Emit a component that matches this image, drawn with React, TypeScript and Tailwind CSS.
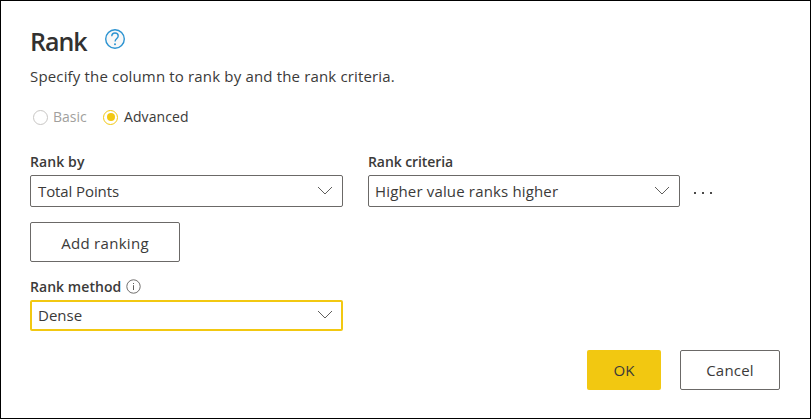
import React from "react";

function Chevron() {
  return (
    <svg width="16" height="9" viewBox="0 0 16 9" fill="none" stroke="#605e5c" strokeWidth="1" className="-mt-[2px] shrink-0">
      <path d="M1 1 L8 8 L15 1" />
    </svg>
  );
}

function Select({ children, focused = false }: { children: React.ReactNode; focused?: boolean }) {
  return (
    <button
      className={
        focused
          ? "flex h-[31px] w-full items-center justify-between rounded-[2px] border-2 border-[#f2c811] pl-[6px] pr-[8px] text-[15px]"
          : "flex h-8 w-full items-center justify-between rounded-[2px] border border-[#6b6967] pl-[7px] pr-[9px] text-[15px]"
      }
    >
      {children}
      <Chevron />
    </button>
  );
}

export default function App() {
  return (
    <main className="h-[419px] w-[811px] overflow-hidden whitespace-nowrap border border-black bg-white pl-[29px] pt-[24px] font-['Open_Sans','Noto_Sans',sans-serif] text-[14px] leading-5 text-[#3b3a39]">
      <header className="flex h-8 items-center">
        <h1 className="w-[75px] text-[25px] font-semibold leading-8 tracking-[-1px] text-[#323130]">Rank</h1>
        <svg width="20" height="20" viewBox="0 0 20 20" fill="none" className="-mt-[5px]">
          <circle cx="10" cy="10" r="9.3" fill="#f8f8f8" stroke="#2b93d1" strokeWidth="1.4" />
          <path d="M6.8 7.2 C6.8 5.1 8.1 4 10 4 C12 4 13.2 5.2 13.2 7 C13.2 9.5 10.1 9.4 10.1 12.6" stroke="#2b93d1" strokeWidth="1.4" />
          <circle cx="10" cy="15.2" r="1" fill="#2b93d1" />
        </svg>
      </header>
      <p className="mt-[9px] text-[15px] tracking-[0.16px]">Specify the column to rank by and the rank criteria.</p>
      <div className="mt-[21px] flex h-5 items-center pl-[3px]">
        <span className="size-[15px] rounded-full border border-[#c8c6c4]" />
        <span className="ml-[5px] w-[50px] text-[#a19f9d]">Basic</span>
        <span className="flex size-[15px] items-center justify-center rounded-full border border-[#f2c811]">
          <span className="size-[8px] rounded-full bg-[#f2c811]" />
        </span>
        <span className="ml-[6px] tracking-[0.1px]">Advanced</span>
      </div>
      <div className="mt-[25px] flex gap-[25px]">
        <div className="w-[313px]">
          <label className="block h-[23px] font-semibold tracking-[0.1px]">Rank by</label>
          <Select><span className="tracking-[-0.1px]">Total Points</span></Select>
        </div>
        <div className="w-[312px]">
          <label className="block h-[23px] font-semibold tracking-[-0.08px]">Rank criteria</label>
          <Select><span className="-ml-px tracking-[0.16px]">Higher value ranks higher</span></Select>
        </div>
        <div className="-ml-[11px] mt-[40px] flex h-[2px] gap-[6px]">
          <span className="size-[2px] bg-[#4a4948]" />
          <span className="size-[2px] bg-[#4a4948]" />
          <span className="size-[2px] bg-[#4a4948]" />
        </div>
      </div>
      <button className="mt-[15px] block h-10 w-[150px] rounded-[2px] border border-[#6b6967] pt-[2px] text-[15px] tracking-[0.3px]"><span>Add ranking</span></button>
      <div className="mt-[15px] flex h-[23px] gap-[5px]">
        <label className="font-semibold tracking-[0.05px]">Rank method</label>
        <svg width="15" height="15" viewBox="0 0 15 15" fill="none" stroke="#605e5c" className="mt-[2px]">
          <circle cx="7.5" cy="7.5" r="6.7" strokeWidth=".9" />
          <path d="M7.5 6.2 V11 M7.5 4 V5" strokeWidth="1" />
        </svg>
      </div>
      <div className="w-[313px]">
        <Select focused><span className="-mt-[2px]">Dense</span></Select>
      </div>
      <footer className="ml-[557px] mt-[19px] flex gap-[19px] text-[15px]">
        <button className="h-10 w-[74px] rounded-[2px] bg-[#f2c811]"><span>OK</span></button>
        <button className="h-10 w-[100px] rounded-[2px] border border-[#6b6967] tracking-[0.2px]"><span>Cancel</span></button>
      </footer>
    </main>
  );
}
